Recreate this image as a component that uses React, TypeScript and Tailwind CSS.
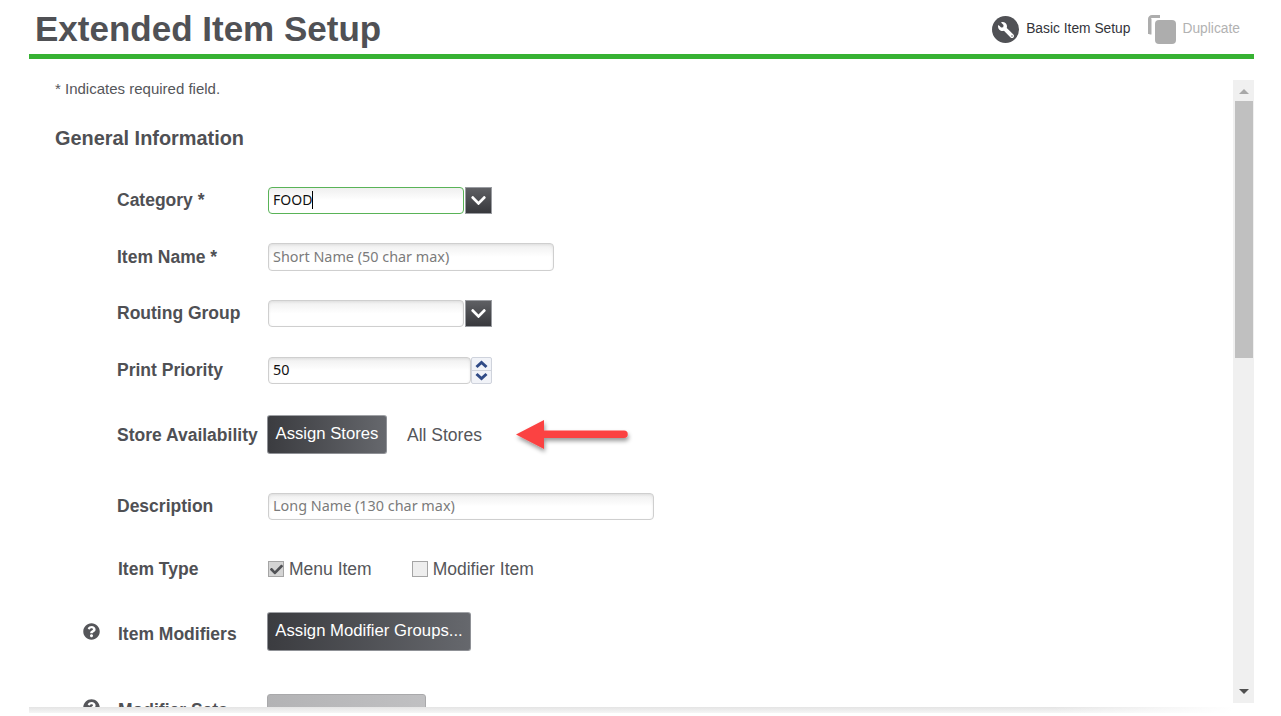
import React from 'react';
import { FaCheck, FaChevronDown, FaQuestionCircle, FaWrench } from 'react-icons/fa';

const inputClass =
  "h-[27px] rounded-[4px] border border-[#cfcfcf] bg-gradient-to-b from-[#efefef] via-white to-white pb-[2px] pl-1 font-['Noto_Sans',sans-serif] text-[14.4px] outline-none shadow-[inset_0_1px_3px_rgba(0,0,0,0.08)]";
const darkButton =
  "h-[39px] rounded-[3px] border border-[#8f9196] border-t-[#a0a2a6] bg-gradient-to-r from-[#3b3c40] to-[#66686d] px-1 pb-[2px] text-[16.7px] text-white";

const Label: React.FC<{ children: React.ReactNode; help?: boolean }> = ({ children, help }) => (
  <div className="relative w-[150px] shrink-0 text-[17.5px] font-bold text-[#4f5054]">
    {help && <FaQuestionCircle className="absolute left-[-35px] top-[2px] text-[17px] text-[#55565a]" />}
    {children}
  </div>
);

const SelectArrow = () => (
  <span className="ml-px flex h-[27px] w-[27px] items-center justify-center border border-[#9a9ca1] bg-gradient-to-b from-[#5f6064] to-[#38393d]">
    <FaChevronDown className="text-[17px] text-white" />
  </span>
);

export default function App() {
  return (
    <div className="flex h-[716px] w-[1281px] flex-col overflow-hidden bg-white pl-[29px] pr-[27px] font-['Liberation_Sans',Arial,sans-serif] text-[#4f5054]">
      <header className="flex h-[59px] shrink-0 items-start justify-between border-b-[5px] border-[#37b233] pl-[6px] pr-[14px]">
        <h1 className="mt-[8px] text-[35px] font-bold leading-[42px] text-[#505155]">Extended Item Setup</h1>
        <div className="mt-[15px] flex items-center">
          <span className="flex h-[27px] w-[27px] items-center justify-center rounded-full bg-[#505155]">
            <FaWrench className="-scale-x-100 text-[16px] text-white" />
          </span>
          <span className="ml-[7px] pb-px text-[13.8px] text-[#33343a]">Basic Item Setup</span>
          <svg className="ml-[18px]" width="28" height="29" viewBox="0 0 28 29">
            <path d="M12 1.5H4A2.5 2.5 0 0 0 1.5 4v15" fill="none" stroke="#adadad" strokeWidth="3" />
            <path d="M1.5 4h2v15.5h-2z" fill="#adadad" />
            <rect x="7" y="5" width="21" height="24" rx="4" fill="#adadad" />
          </svg>
          <span className="ml-[6px] pb-px text-[13.8px] text-[#b2b2b2]">Duplicate</span>
        </div>
      </header>

      <div className="flex h-[648px] shrink-0 pt-[21px]">
        <main className="relative h-full flex-1 overflow-hidden pl-[26px]">
          <p className="text-[15px] leading-[18px] text-[#55565a]">* Indicates required field.</p>
          <h2 className="mt-[28px] text-[19.9px] font-bold leading-[24px] text-[#4f5054]">General Information</h2>

          <div className="ml-[62px] mt-[37px] flex flex-col">
            <div className="flex h-[27px] items-center">
              <Label>Category *</Label>
              <div className="ml-px flex">
                <div className="flex h-[27px] w-[196px] items-center rounded-[4px] border border-[#59b357] bg-gradient-to-b from-[#efefef] via-white to-white pb-[2px] pl-1 font-['Noto_Sans',sans-serif] text-[14px] text-[#111]">
                  FOOD<span className="h-[18px] w-px bg-black" />
                </div>
                <SelectArrow />
              </div>
            </div>

            <div className="mt-[29px] flex h-[28px] items-center">
              <Label>Item Name *</Label>
              <input className={`${inputClass} ml-px h-[28px] w-[286px] placeholder:text-[#7b7b7b]`} placeholder="Short Name (50 char max)" />
            </div>

            <div className="mt-[29px] flex h-[27px] items-center">
              <Label>Routing Group</Label>
              <div className="ml-px flex">
                <input className={`${inputClass} w-[196px]`} />
                <SelectArrow />
              </div>
            </div>

            <div className="mt-[30px] flex h-[27px] items-center">
              <Label>Print Priority</Label>
              <input className={`${inputClass} ml-px w-[203px] text-[#111]`} defaultValue="50" />
              <div className="flex h-[27px] w-[21px] flex-col rounded-[2px] border border-[#cfd3dc] bg-[#f1f3f8] text-[#2f4a86]">
                <svg className="flex-1" viewBox="0 0 19 12" width="19" height="12"><path d="M4.5 9l5-4.5 5 4.5" fill="none" stroke="currentColor" strokeWidth="3" /></svg>
                <svg className="flex-1 border-t border-[#cfd3dc]" viewBox="0 0 19 12" width="19" height="12"><path d="M4.5 3l5 4.5 5-4.5" fill="none" stroke="currentColor" strokeWidth="3" /></svg>
              </div>
            </div>

            <div className="mt-[31px] flex h-[39px] items-center">
              <div className="mt-[2px]"><Label>Store Availability</Label></div>
              <button className={`${darkButton} w-[120px] whitespace-nowrap`}>Assign Stores</button>
              <span className="ml-[20px] mt-[2px] text-[17.5px] text-[#55565a]">All Stores</span>
              <svg className="absolute left-[485px] top-[339px] overflow-visible" width="116" height="36" viewBox="0 0 116 36">
                <defs>
                  <filter id="arrow-shadow" x="-20%" y="-40%" width="140%" height="200%">
                    <feDropShadow dx="1" dy="3" stdDeviation="2" floodColor="#000" floodOpacity="0.4" />
                  </filter>
                </defs>
                <path
                  d="M2 15.5 30 1v10.5h80a3.5 3.5 0 0 1 0 7.5H30v11z"
                  fill="#fb4343"
                  filter="url(#arrow-shadow)"
                />
              </svg>
            </div>

            <div className="mt-[39px] flex h-[27px] items-center">
              <Label>Description</Label>
              <input className={`${inputClass} ml-px w-[386px] placeholder:text-[#7b7b7b]`} placeholder="Long Name (130 char max)" />
            </div>

            <div className="mt-[37px] flex h-[24px] items-center pl-px">
              <Label>Item Type</Label>
              <span className="flex h-[16px] w-[16px] items-center justify-center border border-[#a5a5a5] bg-[#d4d4d4]">
                <FaCheck className="text-[13px] text-[#505155]" />
              </span>
              <span className="ml-[5px] text-[17.5px] text-[#55565a]">Menu Item</span>
              <span className="ml-[40px] h-[16px] w-[16px] border border-[#a5a5a5] bg-[#eeeeee]" />
              <span className="ml-[5px] text-[17.5px] text-[#55565a]">Modifier Item</span>
            </div>

            <div className="mt-[31px] flex h-[39px] items-center pl-px">
              <div className="mt-[6px]"><Label help>Item Modifiers</Label></div>
              <button className={`${darkButton} ml-[-1px] w-[204px] whitespace-nowrap`}>Assign Modifier Groups...</button>
            </div>

            <div className="mt-[43px] flex h-[39px] items-start pl-px">
              <div className="pt-[3px]"><Label help>Modifier Sets</Label></div>
              <button className="ml-[-1px] h-[39px] w-[159px] rounded-[3px] border border-[#a9a9ab] bg-gradient-to-r from-[#b3b3b5] to-[#c0c0c2]" />
            </div>
          </div>
        </main>

        <div className="flex h-[623px] w-[21px] shrink-0 flex-col items-center bg-[#f0f0f0]">
          <span className="mt-[9px] h-0 w-0 border-x-[5px] border-b-[5px] border-x-transparent border-b-[#a8a8a8]" />
          <span className="mt-[7px] h-[257px] w-[18px] bg-[#c0c0c0]" />
          <span className="mt-auto mb-[9px] h-0 w-0 border-x-[5px] border-t-[5px] border-x-transparent border-t-[#505050]" />
        </div>
      </div>

      <div className="h-[6px] w-[1204px] shrink-0 bg-gradient-to-b from-[#e4e4e4] to-[#f6f6f6]">
        <div className="h-full bg-gradient-to-r from-transparent from-[85%] to-white" />
      </div>
    </div>
  );
}
